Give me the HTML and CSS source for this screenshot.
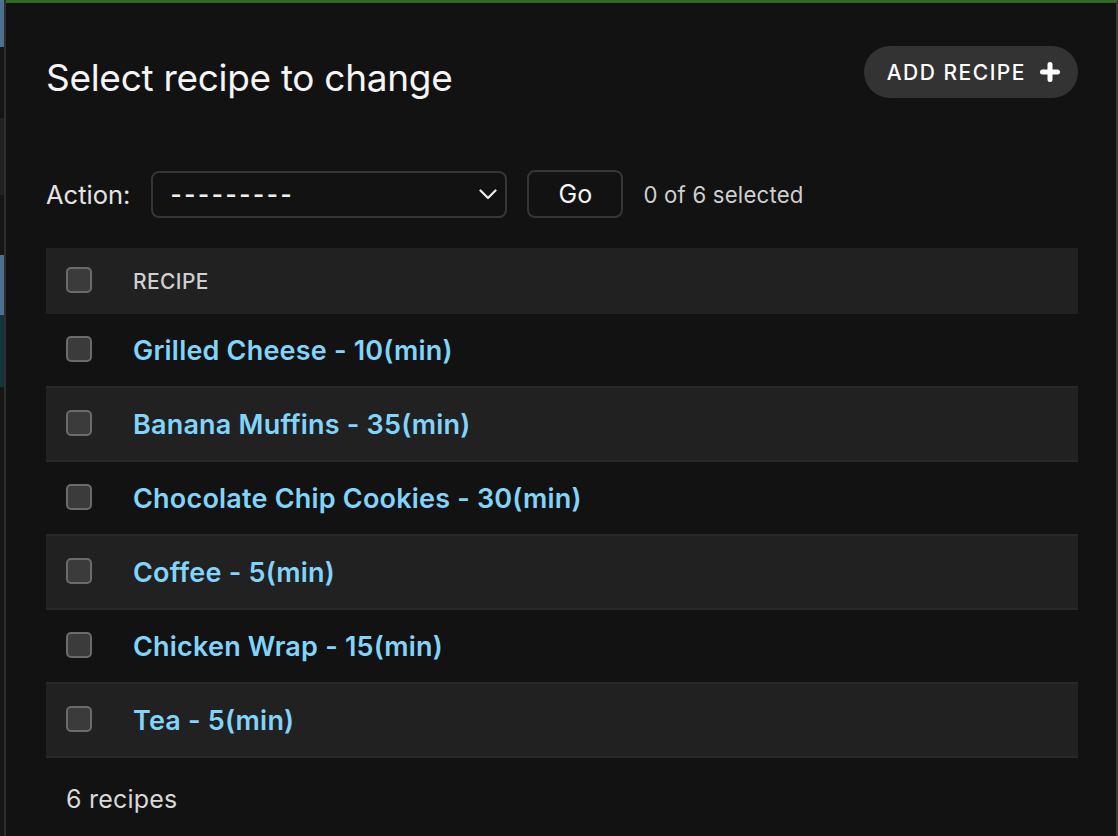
FILE: index.html
```html
<!DOCTYPE html>
<html lang="en">
<head>
<meta charset="utf-8">
<title>Select recipe to change</title>
<link rel="stylesheet" href="styles.css">
</head>
<body>
<div class="page">
  <aside class="sidebar">
    <div class="seg seg-blue s1"></div>
    <div class="seg seg-dark s2"></div>
    <div class="seg seg-gray s3"></div>
    <div class="seg seg-dark s4"></div>
    <div class="seg seg-blue s5"></div>
    <div class="seg seg-teal s6"></div>
    <div class="seg seg-dark s7"></div>
  </aside>
  <main class="main">
    <div class="header">
      <h1 class="title">Select recipe to change</h1>
      <a class="add-btn" href="#">ADD RECIPE
        <svg class="plus" width="20" height="20" viewBox="0 0 20 20"><path d="M10 2.5v15M2.5 10h15" stroke="#fff" stroke-width="5" stroke-linecap="round"/></svg>
      </a>
    </div>
    <div class="actions">
      <label class="action-label">Action:</label>
      <div class="select">
        <span class="select-text">---------</span>
        <svg class="chev" width="18" height="11" viewBox="0 0 18 11"><path d="M1.5 1.5l7.5 7.5 7.5-7.5" fill="none" stroke="#eee" stroke-width="2.2" stroke-linecap="round" stroke-linejoin="round"/></svg>
      </div>
      <button class="go">Go</button>
      <span class="counter">0 of 6 selected</span>
    </div>
    <div class="table">
      <div class="row head">
        <div class="cb-cell"><span class="cb"></span></div>
        <div class="col-title">RECIPE</div>
      </div>
      <div class="row odd"><div class="cb-cell"><span class="cb"></span></div><a class="link" href="#">Grilled Cheese - 10(min)</a></div>
      <div class="row even"><div class="cb-cell"><span class="cb"></span></div><a class="link" href="#">Banana Muffins - 35(min)</a></div>
      <div class="row odd"><div class="cb-cell"><span class="cb"></span></div><a class="link" href="#">Chocolate Chip Cookies - 30(min)</a></div>
      <div class="row even"><div class="cb-cell"><span class="cb"></span></div><a class="link" href="#">Coffee - 5(min)</a></div>
      <div class="row odd"><div class="cb-cell"><span class="cb"></span></div><a class="link" href="#">Chicken Wrap - 15(min)</a></div>
      <div class="row even"><div class="cb-cell"><span class="cb"></span></div><a class="link" href="#">Tea - 5(min)</a></div>
    </div>
    <p class="paginator">6 recipes</p>
  </main>
</div>
</body>
</html>
```

FILE: styles.css
```css
* { box-sizing: border-box; }
html, body {
  margin: 0;
  padding: 0;
  background: #121212;
  height: 100%;
  overflow: hidden;
}
body {
  font-family: Inter, "Noto Sans", sans-serif;
  color: #eeeeee;
}
.page {
  display: flex;
  height: 836px;
}
.sidebar {
  width: 6px;
  border-right: 2px solid #2e2e2e;
  display: flex;
  flex-direction: column;
  background: #151515;
}
.seg { width: 4px; }
.seg-blue { background: #4b7090; }
.seg-dark { background: #151515; }
.seg-gray { background: #212121; }
.seg-teal { background: #163339; }
.s1 { height: 47px; }
.s2 { height: 71px; }
.s3 { height: 77px; }
.s4 { height: 60px; }
.s5 { height: 60px; }
.s6 { height: 72px; }
.s7 { flex: 1; }

.main {
  flex: 1;
  border-top: 3px solid #2e6a21;
  border-right: 2px solid #3a3a3a;
  padding: 43px 38px 0 40px;
  display: flex;
  flex-direction: column;
}
.header {
  display: flex;
  justify-content: space-between;
  align-items: flex-start;
}
.title {
  margin: 8px 0 0 0;
  font-size: 37px;
  line-height: 48px;
  font-weight: 400;
  color: #f5f5f5;
  letter-spacing: -0.3px;
}
.add-btn {
  display: flex;
  align-items: center;
  gap: 14px;
  height: 52px;
  padding: 0 18px 0 23px;
  background: #333333;
  border-radius: 26px;
  color: #ffffff;
  text-decoration: none;
  font-size: 21px;
  font-weight: 500;
  letter-spacing: 1.5px;
}
.plus { display: block; }

.actions {
  margin-top: 68px;
  display: flex;
  align-items: center;
  height: 48px;
}
.action-label {
  font-size: 25.5px;
  color: #e4e4e4;
  margin-right: 21px;
}
.select {
  width: 356px;
  height: 47px;
  border: 2px solid #363636;
  border-radius: 8px;
  display: flex;
  align-items: center;
  justify-content: space-between;
  padding: 0 8px 0 17px;
}
.select-text {
  font-size: 24px;
  font-weight: 600;
  color: #eeeeee;
  letter-spacing: 2.6px;
}
.chev { display: block; }
.go {
  margin-left: 20px;
  width: 96px;
  height: 48px;
  background: #121212;
  border: 2px solid #363636;
  border-radius: 8px;
  color: #f5f5f5;
  font-family: inherit;
  font-size: 25px;
  padding: 0;
}
.counter {
  margin-left: 20px;
  font-size: 22.2px;
  color: #d0d0d0;
  letter-spacing: 0.2px;
}

.table {
  margin-top: 30px;
  display: flex;
  flex-direction: column;
}
.row {
  display: flex;
  align-items: center;
  height: 74px;
  border-bottom: 2px solid #292929;
}
.row.head {
  height: 66px;
  background: #212121;
  border-bottom: none;
}
.row.odd { background: #121212; }
.row.even { background: #212121; }
.cb-cell {
  width: 87px;
  padding-left: 20px;
  display: flex;
  align-items: center;
}
.cb {
  display: block;
  width: 26px;
  height: 26px;
  border: 2px solid #6b6b6b;
  border-radius: 5px;
  background: #3b3b3b;
  margin-top: -3px;
}
.col-title {
  font-size: 21px;
  font-weight: 500;
  color: #d0d0d0;
  letter-spacing: 0.4px;
}
.link {
  font-size: 27px;
  font-weight: 600;
  color: #81d4fa;
  text-decoration: none;
  letter-spacing: 0.2px;
}
.paginator {
  margin: 26px 0 0 20px;
  font-size: 25px;
  color: #d8d8d8;
  letter-spacing: 0.2px;
}
```
